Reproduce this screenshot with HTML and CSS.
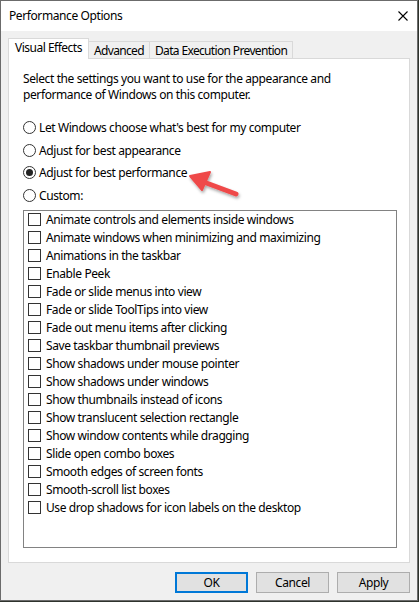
FILE: index.html
```html
<!DOCTYPE html>
<html>
<head>
<meta charset="utf-8">
<link rel="stylesheet" href="styles.css">
</head>
<body>
<div class="window">
  <div class="titlebar">
    <span class="title">Performance Options</span>
    <svg class="close" width="10" height="10" viewBox="0 0 10 10"><path d="M0.5 0.5 L9.5 9.5 M9.5 0.5 L0.5 9.5" stroke="#000" stroke-width="1.1" fill="none"/></svg>
  </div>
  <div class="body">
    <div class="tabs">
      <div class="tab active">Visual Effects</div>
      <div class="tab">Advanced</div>
      <div class="tab">Data Execution Prevention</div>
    </div>
    <div class="panel">
      <p class="desc">Select the settings you want to use for the appearance and<br>performance of Windows on this computer.</p>
      <div class="radios">
        <div class="radio-row"><span class="radio"></span>Let Windows choose what's best for my computer</div>
        <div class="radio-row"><span class="radio"></span>Adjust for best appearance</div>
        <div class="radio-row"><span class="radio checked"></span>Adjust for best performance</div>
        <div class="radio-row"><span class="radio"></span>Custom:</div>
      </div>
      <div class="listbox">
        <div class="check-row"><span class="check"></span>Animate controls and elements inside windows</div>
        <div class="check-row"><span class="check"></span>Animate windows when minimizing and maximizing</div>
        <div class="check-row"><span class="check"></span>Animations in the taskbar</div>
        <div class="check-row"><span class="check"></span>Enable Peek</div>
        <div class="check-row"><span class="check"></span>Fade or slide menus into view</div>
        <div class="check-row"><span class="check"></span>Fade or slide ToolTips into view</div>
        <div class="check-row"><span class="check"></span>Fade out menu items after clicking</div>
        <div class="check-row"><span class="check"></span>Save taskbar thumbnail previews</div>
        <div class="check-row"><span class="check"></span>Show shadows under mouse pointer</div>
        <div class="check-row"><span class="check"></span>Show shadows under windows</div>
        <div class="check-row"><span class="check"></span>Show thumbnails instead of icons</div>
        <div class="check-row"><span class="check"></span>Show translucent selection rectangle</div>
        <div class="check-row"><span class="check"></span>Show window contents while dragging</div>
        <div class="check-row"><span class="check"></span>Slide open combo boxes</div>
        <div class="check-row"><span class="check"></span>Smooth edges of screen fonts</div>
        <div class="check-row"><span class="check"></span>Smooth-scroll list boxes</div>
        <div class="check-row"><span class="check"></span>Use drop shadows for icon labels on the desktop</div>
      </div>
    </div>
    <div class="buttons">
      <button class="btn default">OK</button>
      <button class="btn">Cancel</button>
      <button class="btn">Apply</button>
    </div>
  </div>
  <svg class="arrow" width="60" height="34" viewBox="0 0 60 34">
    <defs>
      <filter id="sh" x="-20%" y="-20%" width="140%" height="160%">
        <feDropShadow dx="1" dy="2" stdDeviation="1.5" flood-color="#000" flood-opacity="0.35"/>
      </filter>
    </defs>
    <g filter="url(#sh)">
      <path d="M14 10 L49 23" stroke="#ef4a4a" stroke-width="5" stroke-linecap="round" fill="none"/>
      <path d="M3 5 L23 1 L15 19 Z" fill="#ef4a4a" stroke="#ef4a4a" stroke-width="2" stroke-linejoin="round"/>
    </g>
  </svg>
</div>
</body>
</html>
```
FILE: styles.css
```css
* { box-sizing: border-box; }
html, body { margin: 0; padding: 0; }
body {
  background: #2e332c;
  width: 419px;
  height: 602px;
  font-family: "Noto Sans", "Open Sans", sans-serif;
  font-size: 12px;
  letter-spacing: -0.4px;
  color: #000;
}
.window {
  position: relative;
  width: 418px;
  height: 601px;
  border: 1px solid #6b6b6b;
  background: #f0f0f0;
  display: flex;
  flex-direction: column;
}
.titlebar {
  height: 30px;
  background: #fff;
  display: flex;
  align-items: center;
  justify-content: space-between;
  padding: 0 9px 0 8px;
  flex: none;
}
.title { font-size: 12px; line-height: 16px; }
.close { display: block; margin-top: -1px; }
.body {
  flex: 1;
  display: flex;
  flex-direction: column;
  padding: 7px 7px 0 7px;
}
.tabs {
  display: flex;
  align-items: flex-end;
  height: 20px;
  flex: none;
  position: relative;
  z-index: 1;
}
.tab {
  height: 17px;
  padding: 0 5px;
  border: 1px solid #d9d9d9;
  border-bottom: none;
  background: #f0f0f0;
  line-height: 17px;
  white-space: nowrap;
  margin-left: -1px;
  letter-spacing: -0.65px;
}
.tab.active {
  height: 21px;
  margin-bottom: -1px;
  background: #fff;
  padding: 0 6px;
  margin-left: 0;
  line-height: 18px;
  letter-spacing: -0.5px;
}
.panel {
  height: 505px;
  flex: none;
  width: 402px;
  background: #fff;
  border: 1px solid #d9d9d9;
  padding: 12px 13px 0 14px;
  display: flex;
  flex-direction: column;
}
.desc {
  margin: 0;
  line-height: 16px;
}
.radios {
  margin-top: 13px;
  display: flex;
  flex-direction: column;
}
.radio-row {
  height: 22.7px;
  display: flex;
  align-items: center;
  white-space: nowrap;
}
.radio {
  width: 13px;
  height: 13px;
  border: 1px solid #333;
  border-radius: 50%;
  margin-right: 3px;
  display: flex;
  align-items: center;
  justify-content: center;
  flex: none;
}
.radio.checked::after {
  content: "";
  width: 7px;
  height: 7px;
  border-radius: 50%;
  background: #222;
}
.listbox {
  margin-top: 3px;
  height: 338px;
  width: 374px;
  border: 1px solid #828282;
  padding: 0 0 0 4px;
  display: flex;
  flex-direction: column;
}
.check-row {
  height: 18px;
  display: flex;
  align-items: center;
  white-space: nowrap;
}
.check {
  width: 13px;
  height: 13px;
  border: 1px solid #333;
  margin-right: 5px;
  flex: none;
}
.buttons {
  display: flex;
  justify-content: flex-end;
  gap: 8px;
  margin-top: 9px;
}
.btn {
  width: 73px;
  height: 21px;
  background: #e1e1e1;
  border: 1px solid #adadad;
  font-family: "Noto Sans", "Open Sans", sans-serif;
  font-size: 12px;
  letter-spacing: -0.4px;
  color: #000;
  padding: 0;
  line-height: 17px;
}
.btn.default {
  border: 2px solid #0078d7;
}
.arrow {
  position: absolute;
  left: 186px;
  top: 170px;
}
```
